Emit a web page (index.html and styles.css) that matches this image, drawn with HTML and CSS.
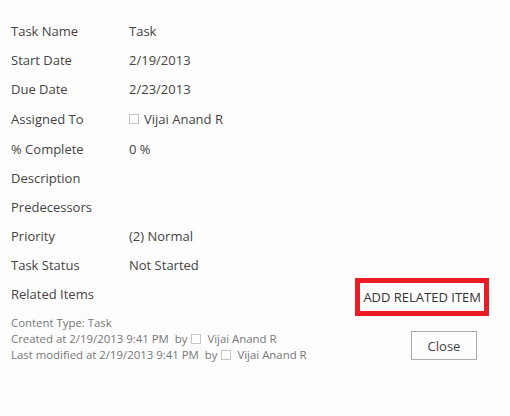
FILE: index.html
```html
<!DOCTYPE html>
<html>
<head>
<meta charset="utf-8">
<link rel="stylesheet" href="styles.css">
</head>
<body>
<div class="dialog">
  <div class="fields">
    <div class="row"><div class="label">Task Name</div><div class="value">Task</div></div>
    <div class="row"><div class="label">Start Date</div><div class="value">2/19/2013</div></div>
    <div class="row"><div class="label">Due Date</div><div class="value">2/23/2013</div></div>
    <div class="row row-tall"><div class="label">Assigned To</div><div class="value"><span class="presence"></span>Vijai Anand R</div></div>
    <div class="row"><div class="label">% Complete</div><div class="value">0 %</div></div>
    <div class="row"><div class="label">Description</div><div class="value"></div></div>
    <div class="row"><div class="label">Predecessors</div><div class="value"></div></div>
    <div class="row"><div class="label">Priority</div><div class="value">(2) Normal</div></div>
    <div class="row"><div class="label">Task Status</div><div class="value">Not Started</div></div>
    <div class="row row-related"><div class="label">Related Items</div><div class="related-box"><span class="related-link">ADD RELATED ITEM</span></div></div>
  </div>
  <div class="footer">
    <div class="meta">
      <div>Content Type: Task</div>
      <div>Created at 2/19/2013 9:41 PM&nbsp; by<span class="presence small"></span>Vijai Anand R</div>
      <div>Last modified at 2/19/2013 9:41 PM&nbsp; by<span class="presence small"></span>Vijai Anand R</div>
    </div>
    <button class="close-btn">Close</button>
  </div>
</div>
</body>
</html>
```
FILE: styles.css
```css
html, body {
  margin: 0;
  padding: 0;
  background: #fdfdfd;
}
body {
  font-family: "Segoe UI", "Open Sans", "Noto Sans", sans-serif;
  font-size: 13px;
  color: #444;
}
.dialog {
  width: 510px;
  height: 416px;
  padding: 16px 21px 0 11px;
  box-sizing: border-box;
}
.row {
  display: grid;
  grid-template-columns: 118px 1fr;
  align-items: center;
  height: 29px;
}
.row-tall {
  height: 31px;
}
.value {
  display: flex;
  align-items: center;
}
.presence {
  display: inline-block;
  width: 8px;
  height: 8px;
  border: 1px solid #c6c6c6;
  margin-right: 5px;
  background: #fff;
}
.presence.small {
  margin: 0 6px 0 4px;
}
.row-related {
  display: flex;
  justify-content: space-between;
}
.related-box {
  border: 5px solid #ed1c24;
  padding: 0 3px;
  height: 28px;
  display: flex;
  align-items: center;
  margin: -3px 0 -9px 0;
  background: #fff;
}
.related-link {
  color: #333;
  font-size: 13px;
}
.footer {
  display: flex;
  justify-content: space-between;
  align-items: flex-start;
  margin-top: 7px;
  padding-right: 12px;
}
.meta {
  font-size: 11.4px;
  line-height: 16px;
  color: #777;
}
.meta .presence {
  vertical-align: -1px;
}
.close-btn {
  margin-top: 16px;
  width: 66px;
  height: 29px;
  border: 1px solid #ababab;
  background: #fdfdfd;
  font-family: inherit;
  font-size: 13px;
  color: #444;
  padding: 0;
}
```
